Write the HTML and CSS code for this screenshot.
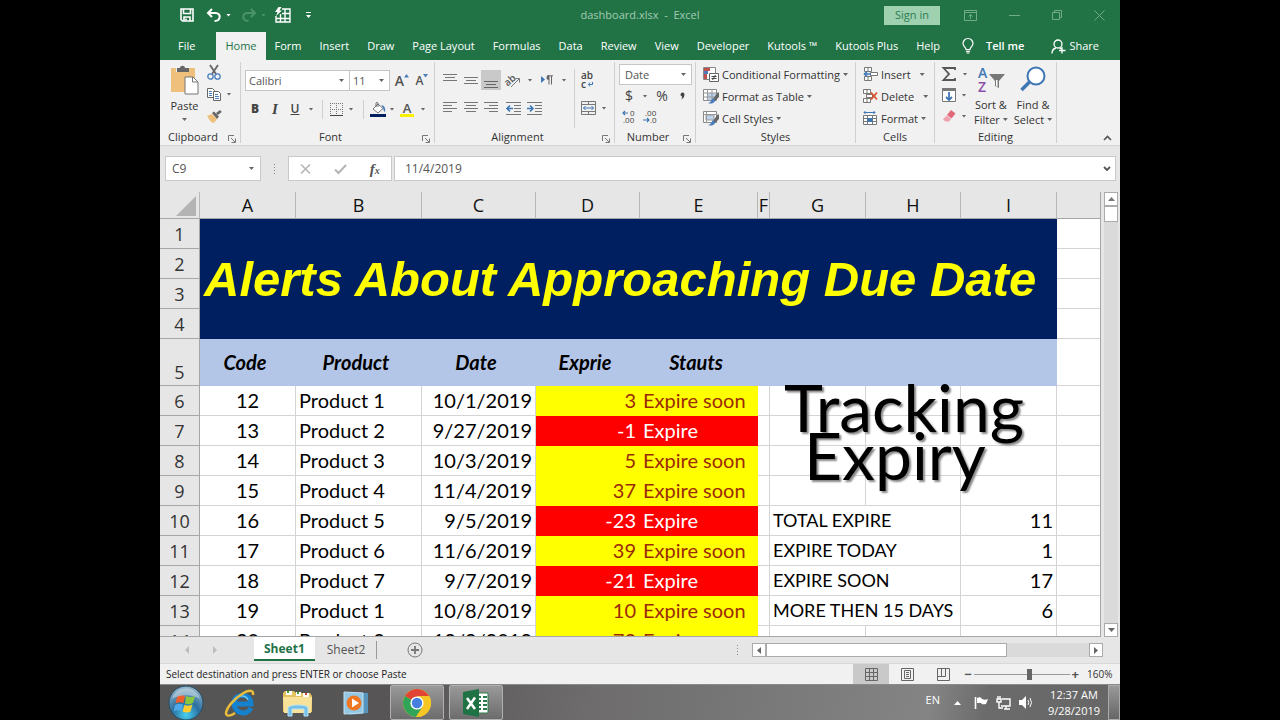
FILE: index.html
```html
<!DOCTYPE html>
<html lang="en">
<head>
<meta charset="utf-8">
<title>dashboard.xlsx - Excel</title>
<link rel="stylesheet" href="styles.css">
</head>
<body>
<div class="desktop">

<header class="titlebar">
  <div class="quick">
    <button class="qa" aria-label="Save"><svg width="14" height="14" viewBox="0 0 14 14" fill="none" stroke="#fff" stroke-width="1.6"><path d="M1 1h12v12H2.500L1 11.500z"/><path d="M3.500 1v4.500h7V1M4 13V9h6v4"/><path d="M6 10.500v2"/></svg></button>
    <button class="qa undo" aria-label="Undo"><svg width="16" height="14" viewBox="0 0 16 14" fill="none" stroke="#fff" stroke-width="2"><path d="M6 1L2 5l4 4M2.500 5h7c6 0 5.500 8-1 8"/></svg><span class="caret light"></span></button>
    <button class="qa redo" aria-label="Redo"><svg width="16" height="14" viewBox="0 0 16 14" fill="none" stroke="#4b9468" stroke-width="2"><path d="M10 1l4 4-4 4M13.500 5h-7c-6 0-5.500 8 1 8"/></svg><span class="caret dim"></span></button>
    <button class="qa" aria-label="Quick table"><svg width="17" height="16" viewBox="0 0 17 16" fill="none" stroke="#fff" stroke-width="1.400"><path d="M8 2h8v13H2V9M2 11.500h14M6.500 7v8M11 2v13M8 6.500h8"/><path d="M4.500 0h3L5.500 3.500H8L2 9l1.500-4H1z" fill="#fff" stroke="none"/></svg></button>
    <button class="qa more" aria-label="Customize toolbar"><svg width="7" height="8" viewBox="0 0 7 8" fill="#fff"><path d="M1 1h5v1H1zM1 4h5L3.500 7z"/></svg></button>
  </div>
  <div class="doc-title">dashboard.xlsx&nbsp; -&nbsp; Excel</div>
  <div class="window-controls">
    <button class="signin">Sign in</button>
    <button class="wc" aria-label="Ribbon options"><svg width="13" height="11" viewBox="0 0 13 11" fill="none" stroke="#6fac87"><path d="M.500.500h12v10H.500zM.500 2.500h12M6.500 9V4.500M4.500 6.500l2-2 2 2"/></svg></button>
    <button class="wc" aria-label="Minimize"><svg width="11" height="11" viewBox="0 0 11 11" stroke="#6fac87"><path d="M0 5.500h11"/></svg></button>
    <button class="wc" aria-label="Restore"><svg width="10" height="11" viewBox="0 0 10 11" fill="none" stroke="#6fac87"><path d="M.500 2.500h7v7h-7zM2.500 2.500v-2h7v7h-2"/></svg></button>
    <button class="wc" aria-label="Close"><svg width="11" height="11" viewBox="0 0 11 11" stroke="#6fac87"><path d="M.500.500l10 10M10.500.500l-10 10"/></svg></button>
  </div>
</header>

<nav class="tabs">
  <button class="tab file">File</button>
  <button class="tab active">Home</button>
  <button class="tab">Form</button>
  <button class="tab">Insert</button>
  <button class="tab">Draw</button>
  <button class="tab">Page Layout</button>
  <button class="tab">Formulas</button>
  <button class="tab">Data</button>
  <button class="tab">Review</button>
  <button class="tab">View</button>
  <button class="tab">Developer</button>
  <button class="tab">Kutools ™</button>
  <button class="tab">Kutools Plus</button>
  <button class="tab">Help</button>
  <button class="tab tell"><svg width="12" height="16" viewBox="0 0 12 16" fill="none" stroke="#fff" stroke-width="1.200"><path d="M4 11.500C4 9 1 8.500 1 5.500a5 5 0 0 1 10 0C11 8.500 8 9 8 11.500zM4 13.300h4M4.500 15h3"/></svg><span>Tell me</span></button>
  <button class="tab share"><svg width="15" height="15" viewBox="0 0 15 15" fill="none" stroke="#fff" stroke-width="1.300"><circle cx="7" cy="5" r="4"/><path d="M1 14.500c0-3 2-5 4-5.500M8.500 9l2 1M11 8v6.500M8 11.500h6.500"/></svg><span>Share</span></button>
</nav>

<section class="ribbon">
  <div class="group clipboard">
    <div class="body clip-body">
      <button class="big paste"><svg width="28" height="29" viewBox="0 0 28 29"><path d="M0 2h24v24H0z" fill="#eec07c"/><path d="M5 0h13v6H5z" fill="#f1f1f1"/><path d="M6 2h3c0-3 5-3 5 0h4v4H6z" fill="#666"/><path d="M14 11h8l5 5v12H14z" fill="#fff" stroke="#777"/><path d="M21.500 11v5H27" fill="none" stroke="#777"/></svg><span>Paste</span><span class="caret"></span></button>
      <div class="clip-side">
        <button class="ib w16" aria-label="Cut"><svg width="14" height="15" viewBox="0 0 14 15" fill="none"><path d="M3 0l6 9M11 0L5 9" stroke="#666" stroke-width="1.800"/><circle cx="3.500" cy="11.500" r="2.700" stroke="#4a7ebb" stroke-width="1.300"/><circle cx="10.500" cy="11.500" r="2.700" stroke="#4a7ebb" stroke-width="1.300"/></svg></button>
        <div class="row"><button class="ib w16" aria-label="Copy"><svg width="14" height="13" viewBox="0 0 14 13" fill="#fff" stroke="#666"><path d="M.500.500h5l2 2v7h-7z"/><path d="M2 3.500h3M2 5.500h3M2 7.500h3" stroke="#4a7ebb"/><path d="M6.500 3.500h5l2 2v7h-7z"/><path d="M8 6.500h3M8 8.500h4M8 10.500h4" stroke="#4a7ebb"/></svg></button><button class="ib w14" aria-label="Copy options"><span class="caret"></span></button></div>
        <button class="ib w16" aria-label="Format painter"><svg width="15" height="13" viewBox="0 0 15 13"><path d="M0 6l5-2 5 5-3 4-3-1z" fill="#eec07c"/><path d="M5 3l2-1.500 5 5L10 9zM9 3l4-3 1.800 2-4 3z" fill="#666"/></svg></button>
      </div>
    </div>
    <div class="glabel"><span>Clipboard</span><svg class="launch" width="8" height="8" viewBox="0 0 8 8" fill="none" stroke="#777"><path d="M.500 6V.500H6M3 3l4 4M7.500 3.500v4h-4"/></svg></div>
  </div>

  <div class="group font">
    <div class="body two">
      <div class="row">
        <span class="combo face"><select aria-label="Font"><option>Calibri</option></select><span class="caret"></span></span>
        <span class="combo size"><select aria-label="Font size"><option>11</option></select><span class="caret"></span></span>
        <button class="ib w24 grow" aria-label="Increase font size"><b>A</b><svg width="5" height="4" viewBox="0 0 5 4"><path d="M0 3.500L2.500 0 5 3.500z" fill="#4a7ebb"/></svg></button>
        <button class="ib w16 shrink" aria-label="Decrease font size"><b>A</b><svg width="5" height="4" viewBox="0 0 5 4"><path d="M0 0h5L2.500 3.500z" fill="#4a7ebb"/></svg></button>
      </div>
      <div class="row">
        <button class="ib w20 glyph"><b>B</b></button>
        <button class="ib w20 glyph serif"><i>I</i></button>
        <button class="ib w20 glyph"><u>U</u></button>
        <button class="ib w12" aria-label="Underline options"><span class="caret"></span></button>
        <span class="sep"></span>
        <button class="ib w16" aria-label="Borders"><svg width="13" height="13" viewBox="0 0 13 13" fill="none" stroke="#777"><path d="M.500 0v12M12.500 0v12M6.500 0v12M0 .500h13M0 6.500h13" stroke-dasharray="1 1"/><path d="M0 12.500h13" stroke="#444"/></svg></button>
        <button class="ib w14" aria-label="Border options"><span class="caret"></span></button>
        <span class="sep"></span>
        <button class="ib w18" aria-label="Fill color"><svg width="16" height="15" viewBox="0 0 16 15"><path d="M8 2l5 4.500-5 4.500-5-4z" fill="#fff" stroke="#777"/><path d="M6 5V1.500C6 0 8 0 8 1.500V5" fill="none" stroke="#666"/><path d="M11 3c3 0 5 3 4 7-2-1-1-4-4-7z" fill="#4a7ebb"/><path d="M0 12h16v3H0z" fill="#001f60"/></svg></button>
        <button class="ib w10" aria-label="Fill options"><span class="caret"></span></button>
        <button class="ib w20 fontcolor" aria-label="Font color"><b>A</b></button>
        <button class="ib w12" aria-label="Font color options"><span class="caret"></span></button>
      </div>
    </div>
    <div class="glabel"><span>Font</span><svg class="launch" width="8" height="8" viewBox="0 0 8 8" fill="none" stroke="#777"><path d="M.500 6V.500H6M3 3l4 4M7.500 3.500v4h-4"/></svg></div>
  </div>

  <div class="group align">
    <div class="body align-body">
      <div class="two align-main">
        <div class="row">
          <button class="ib w22" aria-label="Top align"><svg width="14" height="16" viewBox="0 0 14 16" stroke="#777"><path d="M0 2.500h14M2 5.500h10M0 8.500h14"/></svg></button>
          <button class="ib w20" aria-label="Middle align"><svg width="14" height="16" viewBox="0 0 14 16" stroke="#777"><path d="M0 5.500h14M2 8.500h10M0 11.500h14"/></svg></button>
          <button class="ib w20 on" aria-label="Bottom align"><svg width="14" height="16" viewBox="0 0 14 16" stroke="#666"><path d="M0 9.500h14M2 12.500h10M0 15.500h14"/></svg></button>
          <button class="ib w24" aria-label="Orientation"><svg width="16" height="15" viewBox="0 0 16 15"><text x="0" y="11" font-family="Open Sans" font-size="10" font-weight="600" fill="#555" transform="rotate(-42 5 9)">ab</text><path d="M6 14L14 6M10.500 5.500h4v4" fill="none" stroke="#777"/></svg></button>
          <button class="ib w10" aria-label="Orientation options"><span class="caret"></span></button>
          <button class="ib w24" aria-label="Text direction"><svg width="12" height="10" viewBox="0 0 12 10"><path d="M0 1l4 3.500L0 8z" fill="#3f77b5"/><path d="M8 1v8.500M10.500 1v8.500M6.500.800H12" fill="none" stroke="#666"/><path d="M8 0a2.500 2.500 0 0 0 0 5z" fill="#666"/></svg></button>
          <button class="ib w10" aria-label="Direction options"><span class="caret"></span></button>
        </div>
        <div class="row">
          <button class="ib w22" aria-label="Align left"><svg width="14" height="12" viewBox="0 0 14 12" stroke="#777"><path d="M0 .500h14M0 3.500h9M0 6.500h14M0 9.500h9"/></svg></button>
          <button class="ib w20" aria-label="Center"><svg width="14" height="12" viewBox="0 0 14 12" stroke="#777"><path d="M0 .500h14M2 3.500h10M0 6.500h14M2 9.500h10"/></svg></button>
          <button class="ib w20" aria-label="Align right"><svg width="14" height="12" viewBox="0 0 14 12" stroke="#777"><path d="M0 .500h14M5 3.500h9M0 6.500h14M5 9.500h9"/></svg></button>
          <button class="ib w24" aria-label="Decrease indent"><svg width="15" height="13" viewBox="0 0 15 13" fill="none" stroke="#777"><path d="M0 .500h15M8 3.500h7M8 6.500h7M8 9.500h7M0 12.500h15"/><path d="M7 6.500H1M4 3.500l-3 3 3 3" stroke="#3f77b5" stroke-width="1.600"/></svg></button>
          <button class="ib w18" aria-label="Increase indent"><svg width="15" height="13" viewBox="0 0 15 13" fill="none" stroke="#777"><path d="M0 .500h15M8 3.500h7M8 6.500h7M8 9.500h7M0 12.500h15"/><path d="M0 6.500h6M3 3.500l3 3-3 3" stroke="#3f77b5" stroke-width="1.600"/></svg></button>
        </div>
      </div>
      <div class="two align-side">
        <div class="row"><button class="ib w18 wrap" aria-label="Wrap text"><span>ab</span><span class="wrap-c">c<svg width="5" height="5" viewBox="0 0 5 5"><path d="M4.500 0v2.500H.500M2 .500l-1.500 2 1.500 2" fill="none" stroke="#3f77b5"/></svg></span></button></div>
        <div class="row"><button class="ib w18" aria-label="Merge and center"><svg width="15" height="14" viewBox="0 0 15 14" fill="none" stroke="#777"><path d="M.500.500h14v13H.500zM0 3.500h15M0 10.500h15M7.500 0v3M7.500 11v3"/><path d="M2.500 7h10M4.500 5l-2 2 2 2M10.500 5l2 2-2 2" stroke="#3f77b5"/></svg></button><button class="ib w14" aria-label="Merge options"><span class="caret"></span></button></div>
      </div>
    </div>
    <div class="glabel"><span>Alignment</span><svg class="launch" width="8" height="8" viewBox="0 0 8 8" fill="none" stroke="#777"><path d="M.500 6V.500H6M3 3l4 4M7.500 3.500v4h-4"/></svg></div>
  </div>

  <div class="group number">
    <div class="body three">
      <span class="combo fmt"><select aria-label="Number format"><option>Date</option></select><span class="caret"></span></span>
      <div class="row"><button class="ib w20 sym">$</button><button class="ib w12" aria-label="Currency options"><span class="caret"></span></button><button class="ib w22 sym">%</button><button class="ib w18" aria-label="Comma style"><svg width="5" height="8" viewBox="0 0 5 8"><path d="M4.500 2.500C4.500 5 3 7 1 7.500 2 6.500 2.300 5.500 2 4.500a2 2 0 1 1 2.500-2z" fill="#444"/></svg></button></div>
      <div class="row"><button class="ib w20" aria-label="Increase decimal"><svg width="14" height="14" viewBox="0 0 14 14"><text x="8" y="6" font-family="Open Sans" font-size="8" fill="#444">0</text><text x="1" y="13" font-family="Open Sans" font-size="8" fill="#444">.00</text><path d="M6 3H1M3 1L1 3l2 2" fill="none" stroke="#3f77b5" stroke-width="1.200"/></svg></button><button class="ib w22" aria-label="Decrease decimal"><svg width="14" height="14" viewBox="0 0 14 14"><text x="2" y="6" font-family="Open Sans" font-size="8" fill="#444">.00</text><text x="7" y="13" font-family="Open Sans" font-size="8" fill="#444">.0</text><path d="M0 10h6M4 8l2 2-2 2" fill="none" stroke="#3f77b5" stroke-width="1.200"/></svg></button></div>
    </div>
    <div class="glabel"><span>Number</span><svg class="launch" width="8" height="8" viewBox="0 0 8 8" fill="none" stroke="#777"><path d="M.500 6V.500H6M3 3l4 4M7.500 3.500v4h-4"/></svg></div>
  </div>

  <div class="group styles">
    <div class="body three">
      <button class="cmd"><svg width="16" height="15" viewBox="0 0 16 15"><path d="M.500.500h12v12H.500z" fill="#fff" stroke="#888"/><path d="M1 1h6v3H1zM1 7h3v5H1z" fill="#c0504d"/><path d="M1 4h4v3H1z" fill="#4a7ebb"/><path d="M6.500 6.500h9v8h-9z" fill="#fff" stroke="#666"/><path d="M8.500 9.500h5M8.500 11.500h5M12.500 8l-3 5" stroke="#444"/></svg><span>Conditional Formatting</span><span class="caret"></span></button>
      <button class="cmd"><svg width="16" height="15" viewBox="0 0 16 15"><path d="M.500.500h13v11H.500z" fill="#fff" stroke="#888"/><path d="M4 4h9v7H4z" fill="#bcd2ea"/><path d="M0 4h14M0 8h14M4.500 0v12M9 0v12" stroke="#999"/><path d="M15 3l1 1v4l-4 4-2-2z" fill="#666"/><path d="M10 9l2.500 2.500C10 15 8 15 5 14c3 0 3-3 5-5z" fill="#4a7ebb"/></svg><span>Format as Table</span><span class="caret"></span></button>
      <button class="cmd"><svg width="16" height="15" viewBox="0 0 16 15"><path d="M.500.500h13v11H.500z" fill="#fff" stroke="#888"/><path d="M3 4h8v5H3z" fill="#bcd2ea" stroke="#999"/><path d="M0 3.500h14M3.500 0v12" stroke="#999"/><path d="M15 3l1 1v4l-4 4-2-2z" fill="#666"/><path d="M10 9l2.500 2.500C10 15 8 15 5 14c3 0 3-3 5-5z" fill="#4a7ebb"/></svg><span>Cell Styles</span><span class="caret"></span></button>
    </div>
    <div class="glabel"><span>Styles</span></div>
  </div>

  <div class="group cells">
    <div class="body three">
      <button class="cmd"><svg width="15" height="15" viewBox="0 0 15 15" fill="#fff" stroke="#777"><path d="M1.500.500h7v4h-7zM1.500 9.500h7v4h-7zM5 .500v4M5 9.500v4M7.500 5.500h7v3h-7z"/><path d="M8 7H1M4 4.500L1.500 7 4 9.500" fill="none" stroke="#3f77b5" stroke-width="1.600"/></svg><span class="wide">Insert</span><span class="caret"></span></button>
      <button class="cmd"><svg width="15" height="15" viewBox="0 0 15 15" fill="#fff" stroke="#777"><path d="M.500.500h7v4h-7zM.500 9.500h7v4h-7zM4 .500v4M4 9.500v4M3.500 5.500h6v3h-6z"/><path d="M8 3.500l6 7M14 3.500l-6 7" fill="none" stroke="#d9532c" stroke-width="1.800"/></svg><span class="wide">Delete</span><span class="caret"></span></button>
      <button class="cmd"><svg width="15" height="15" viewBox="0 0 15 15" fill="none" stroke="#777"><path d="M.500 4.500h13v9H.500zM.500 7.500h13M.500 10.500h13M4.500 4v10M9.500 4v10" fill="#fff"/><path d="M4.500 7h5v4h-5z" fill="#3f77b5" stroke="none"/><path d="M1 1.500h11M2.500 0L1 1.500 2.500 3M10.500 0L12 1.500 10.500 3" stroke="#3f77b5"/></svg><span>Format</span><span class="caret"></span></button>
    </div>
    <div class="glabel"><span>Cells</span></div>
  </div>

  <div class="group editing">
    <div class="body edit-body">
      <div class="three edit-side">
        <div class="row"><button class="ib w18" aria-label="AutoSum"><svg width="14" height="14" viewBox="0 0 14 14"><path d="M13 3V1H1.500L7 7l-5.500 6H13v-2" fill="none" stroke="#555" stroke-width="1.800"/></svg></button><button class="ib w14" aria-label="Sum options"><span class="caret"></span></button></div>
        <div class="row"><button class="ib w18" aria-label="Fill"><svg width="14" height="14" viewBox="0 0 14 14" fill="none"><path d="M.500.500h13v13H.500z" fill="#fff" stroke="#777"/><path d="M0 0h14v3H0z" fill="#777"/><path d="M7 4v8M4 9l3 3 3-3" stroke="#3f77b5" stroke-width="1.800"/></svg></button><button class="ib w12" aria-label="Fill options"><span class="caret"></span></button></div>
        <div class="row"><button class="ib w18" aria-label="Clear"><svg width="13" height="12" viewBox="0 0 13 12"><path d="M8 0l4.500 3.500-4 5L4 5z" fill="#e06878"/><path d="M3.500 5.500L8 9l-2 2.500H2.500L0 9.500z" fill="#f0a0aa"/></svg></button><button class="ib w12" aria-label="Clear options"><span class="caret"></span></button></div>
      </div>
      <button class="big"><svg width="28" height="28" viewBox="0 0 28 28"><text x="1" y="12" font-family="Open Sans" font-size="14" font-weight="600" fill="#3f77b5">A</text><text x="1" y="26" font-family="Open Sans" font-size="14" font-weight="600" fill="#8e4fa8">Z</text><path d="M12 8h16l-6 7v7l-4-2v-5z" fill="#777"/><path d="M19 14v6l1.500 1v-7z" fill="#fff"/></svg><span>Sort &amp;</span><span class="line">Filter <span class="caret"></span></span></button>
      <button class="big find"><svg width="26" height="28" viewBox="0 0 26 28" fill="none" stroke="#3f77b5"><circle cx="16" cy="10" r="8.500" fill="#fff" stroke-width="2"/><path d="M9.500 16L1.500 24" stroke-width="3.500"/></svg><span>Find &amp;</span><span class="line">Select <span class="caret"></span></span></button>
    </div>
    <div class="glabel"><span>Editing</span></div>
  </div>
  <button class="collapse" aria-label="Collapse the ribbon"><svg width="9" height="6" viewBox="0 0 9 6" fill="none" stroke="#555" stroke-width="1.600"><path d="M1 5l3.500-3.500L8 5"/></svg></button>
</section>

<section class="formula-bar">
  <div class="namebox"><input type="text" value="C9" aria-label="Name box"><span class="caret"></span></div>
  <div class="dots"><i></i><i></i><i></i><i></i></div>
  <div class="fxbox">
    <button class="ib" aria-label="Cancel"><svg width="11" height="10" viewBox="0 0 11 10" stroke="#b5b5b5" stroke-width="1.600"><path d="M1 .500l9 9M10 .500l-9 9"/></svg></button>
    <button class="ib" aria-label="Enter"><svg width="13" height="10" viewBox="0 0 13 10" fill="none" stroke="#b5b5b5" stroke-width="2"><path d="M1 5.500L4.500 9 12 1"/></svg></button>
    <button class="ib fx" aria-label="Insert function"><i>f</i><small>x</small></button>
  </div>
  <div class="formula"><input type="text" value="11/4/2019" aria-label="Formula"><svg width="8" height="6" viewBox="0 0 8 6" fill="none" stroke="#555" stroke-width="1.800"><path d="M1 1l3 3 3-3"/></svg></div>
</section>

<main class="workspace">
  <div class="grid">
    <table>
      <colgroup><col class="c-row"><col class="c-a"><col class="c-b"><col class="c-c"><col class="c-d"><col class="c-e"><col class="c-f"><col class="c-g"><col class="c-h"><col class="c-i"><col></colgroup>
      <thead>
        <tr><th class="corner"><svg width="20" height="20" viewBox="0 0 20 20"><path d="M20 0v20H0z" fill="#b4b4b4"/></svg></th><th>A</th><th>B</th><th>C</th><th>D</th><th>E</th><th>F</th><th>G</th><th>H</th><th>I</th><th></th></tr>
      </thead>
      <tbody>
        <tr><th>1</th><td class="banner" colspan="9" rowspan="4">Alerts About Approaching Due Date</td><td></td></tr>
        <tr><th>2</th><td></td></tr>
        <tr><th>3</th><td></td></tr>
        <tr><th>4</th><td></td></tr>
        <tr class="heads"><th>5</th><td>Code</td><td>Product</td><td>Date</td><td>Exprie</td><td>Stauts</td><td></td><td></td><td></td><td></td><td class="plain"></td></tr>
        <tr class="soon"><th>6</th><td>12</td><td>Product 1</td><td>10/1/2019</td><td>3</td><td>Expire soon</td><td></td><td></td><td></td><td></td><td></td></tr>
        <tr class="late"><th>7</th><td>13</td><td>Product 2</td><td>9/27/2019</td><td>-1</td><td>Expire</td><td></td><td></td><td></td><td></td><td></td></tr>
        <tr class="soon"><th>8</th><td>14</td><td>Product 3</td><td>10/3/2019</td><td>5</td><td>Expire soon</td><td></td><td></td><td></td><td></td><td></td></tr>
        <tr class="soon"><th>9</th><td>15</td><td>Product 4</td><td>11/4/2019</td><td>37</td><td>Expire soon</td><td></td><td></td><td></td><td></td><td></td></tr>
        <tr class="late"><th>10</th><td>16</td><td>Product 5</td><td>9/5/2019</td><td>-23</td><td>Expire</td><td></td><td class="caps" colspan="2">TOTAL EXPIRE</td><td class="num">11</td><td></td></tr>
        <tr class="soon"><th>11</th><td>17</td><td>Product 6</td><td>11/6/2019</td><td>39</td><td>Expire soon</td><td></td><td class="caps" colspan="2">EXPIRE TODAY</td><td class="num">1</td><td></td></tr>
        <tr class="late"><th>12</th><td>18</td><td>Product 7</td><td>9/7/2019</td><td>-21</td><td>Expire</td><td></td><td class="caps" colspan="2">EXPIRE SOON</td><td class="num">17</td><td></td></tr>
        <tr class="soon"><th>13</th><td>19</td><td>Product 1</td><td>10/8/2019</td><td>10</td><td>Expire soon</td><td></td><td class="caps" colspan="2">MORE THEN 15 DAYS</td><td class="num">6</td><td></td></tr>
        <tr class="soon"><th>14</th><td>20</td><td>Product 2</td><td>12/9/2019</td><td>72</td><td>Expire soon</td><td></td><td></td><td></td><td></td><td></td></tr>
      </tbody>
    </table>
    <div class="wordart"><div>Tracking</div><div>Expiry</div></div>
  </div>
  <div class="vscroll">
    <button class="sb" aria-label="Scroll up"><svg width="7" height="4" viewBox="0 0 7 4"><path d="M0 4l3.500-4L7 4z" fill="#777"/></svg></button>
    <div class="vthumb"></div>
    <button class="sb end" aria-label="Scroll down"><svg width="7" height="4" viewBox="0 0 7 4"><path d="M0 0h7L3.500 4z" fill="#666"/></svg></button>
  </div>
</main>

<div class="sheetbar">
  <div class="sheetnav"><svg width="4" height="8" viewBox="0 0 4 8"><path d="M4 0v8L0 4z" fill="#bdbdbd"/></svg><svg width="4" height="8" viewBox="0 0 4 8"><path d="M0 0v8l4-4z" fill="#bdbdbd"/></svg></div>
  <button class="sheet current">Sheet1</button>
  <button class="sheet">Sheet2</button>
  <span class="sheetsep"></span>
  <button class="ib add" aria-label="New sheet"><svg width="16" height="16" viewBox="0 0 16 16" fill="none" stroke="#777"><circle cx="8" cy="8" r="7"/><path d="M8 4v8M4 8h8" stroke-width="1.800"/></svg></button>
  <div class="dots"><i></i><i></i><i></i><i></i></div>
  <div class="hscroll">
    <button class="sb" aria-label="Scroll left"><svg width="4" height="7" viewBox="0 0 4 7"><path d="M4 0v7L0 3.500z" fill="#666"/></svg></button>
    <div class="hthumb"></div><div class="htrack"></div>
    <button class="sb" aria-label="Scroll right"><svg width="4" height="7" viewBox="0 0 4 7"><path d="M0 0v7l4-3.500z" fill="#666"/></svg></button>
  </div>
</div>

<footer class="status">
  <span class="message">Select destination and press ENTER or choose Paste</span>
  <button class="view on" aria-label="Normal view"><svg width="13" height="13" viewBox="0 0 13 13" fill="none" stroke="#666"><path d="M.500.500h12v12H.500zM.500 4.500h12M.500 8.500h12M4.500.500v12M8.500.500v12"/></svg></button>
  <button class="view" aria-label="Page layout view"><svg width="13" height="13" viewBox="0 0 13 13" fill="none" stroke="#666"><path d="M.500.500h12v12H.500zM3.500 2.500h6v8h-6zM5 4.500h3M5 6.500h3M5 8.500h3"/></svg></button>
  <button class="view" aria-label="Page break view"><svg width="13" height="13" viewBox="0 0 13 13" fill="none" stroke="#666"><path d="M.500.500h12v12H.500zM.500 8.500h8v-8M4.500.500v8"/></svg></button>
  <div class="zoom"><span>−</span><input type="range" min="10" max="260" value="158" aria-label="Zoom"><span>+</span></div>
  <span class="percent">160%</span>
</footer>

<div class="taskbar">
  <button class="task orb" aria-label="Start"><svg width="36" height="36" viewBox="0 0 36 36"><defs><radialGradient id="orb" cx=".5" cy=".85" r=".8"><stop offset="0" stop-color="#48d0f0"/><stop offset=".5" stop-color="#2a6f9f"/><stop offset="1" stop-color="#8fb2c8"/></radialGradient></defs><circle cx="18" cy="18" r="17" fill="url(#orb)" stroke="#234b63"/><path d="M9 12c3-2 5-2 8-1l-1.500 7c-3-1-5-1-8 .500z" fill="#f0602c"/><path d="M18 11c3 1.500 6 1.500 9 0l-2 7c-3 1.500-5.500 1.500-8 .500z" fill="#8cc63f"/><path d="M7 20c3-2 5-1.500 8-.500L13.500 26c-3-1-5-1-8 .500z" fill="#4fa8e8"/><path d="M16.500 20c3 1 5 1 8-.500l-2 7c-3 1.500-5 1-8 0z" fill="#fccb2e"/><path d="M4 14a14.500 14.500 0 0 1 28 0c-8-5-20-5-28 0z" fill="#fff" opacity=".35"/></svg></button>
  <button class="task" aria-label="Internet Explorer"><svg width="34" height="30" viewBox="0 0 34 30" fill="none"><path d="M28 20c-4 8-17 6-17-5 0-10 17-11 17 1H12" stroke="#1582cf" stroke-width="5"/><path d="M11 13c2-6 12-7 14-1" stroke="#6cc5f2" stroke-width="1.500"/><path d="M30 7c1-6-5-5-11-1C11 11 4 19 3 25c0 4 5 3 9 0" stroke="#e9bd3c" stroke-width="2.500"/></svg></button>
  <button class="task" aria-label="Explorer"><svg width="32" height="28" viewBox="0 0 32 28"><path d="M1 4l2-2h9l2 2h14l2 3v16H1z" fill="#e5c260"/><path d="M4 2h6v4H4zM14 3h5v4h-5zM21 4h6v4h-6z" fill="#fff"/><path d="M5 2h2v2H5zM15 3h2v2h-2z" fill="#3fa535"/><path d="M23 4h2v2h-2z" fill="#d2452f"/><path d="M1 8h29l-1 16H2z" fill="#f8e29a"/><path d="M6 27V19c0-4 20-4 20 0v8h-4v-7H10v7z" fill="#74bfe6" stroke="#b8e3f7"/></svg></button>
  <button class="task" aria-label="Media Player"><svg width="26" height="26" viewBox="0 0 26 26"><path d="M5 2l20 1v20L6 25z" fill="#5794bd"/><path d="M1 2l19 1v20L1 24z" fill="#93c8e4" stroke="#c2e1f0"/><circle cx="11" cy="13" r="7.500" fill="#ef7622"/><path d="M9 8.500l7 4.500-7 4.500z" fill="#fff"/></svg></button>
  <button class="task open" aria-label="Chrome"><svg width="30" height="30" viewBox="0 0 30 30"><circle cx="15" cy="15" r="14" fill="#f6c624"/><path d="M15 15L2.900 8A14 14 0 0 1 27.100 8z" fill="#df4434"/><path d="M2.900 8A14 14 0 0 0 14 29l7-11-6-3z" fill="#31a457"/><path d="M15 8h12.100A14 14 0 0 1 14 29l7.200-11z" fill="#f6c624"/><circle cx="15" cy="15" r="6.600" fill="#fff"/><circle cx="15" cy="15" r="5.200" fill="#477fe0"/></svg></button>
  <button class="task open" aria-label="Excel"><svg width="28" height="28" viewBox="0 0 28 28"><path d="M13 4h13v20H13z" fill="#fff" stroke="#287b48"/><path d="M15 7h4v2h-4zM21 7h4v2h-4zM15 11h4v2h-4zM21 11h4v2h-4zM15 15h4v2h-4zM21 15h4v2h-4zM15 19h4v2h-4zM21 19h4v2h-4z" fill="#287b48"/><path d="M1 3l16-3v28L1 25z" fill="#1f7244"/><path d="M5 9l8 11M13 8.500L5 20" stroke="#fff" stroke-width="2.500"/></svg></button>
  <div class="tray">
    <span class="lang">EN</span>
    <svg width="7" height="4" viewBox="0 0 7 4"><path d="M0 4l3.500-4L7 4z" fill="#fff"/></svg>
    <svg width="14" height="14" viewBox="0 0 14 14"><path d="M1.500 1v12" stroke="#fff" stroke-width="1.600"/><path d="M3 2c2-1 4-1 5 1 2 1 4 1 6 0l-2 5c-2 0-4 1-5-1H3z" fill="#fff"/></svg>
    <svg width="15" height="14" viewBox="0 0 15 14" fill="none" stroke="#fff" stroke-width="1.400"><path d="M6 3h8v7H5M8 13h6M10 10v3M1 3h4v3H1zM2 0v3M4 0v3M3 6v6h4"/></svg>
    <svg width="14" height="13" viewBox="0 0 14 13" fill="none" stroke="#fff"><path d="M0 4h3l4-4v13L3 9H0z" fill="#fff" stroke="none"/><path d="M9 4q1.500 2.500 0 5M11 2q3 4.500 0 9"/></svg>
  </div>
  <div class="clock"><span>12:37 AM</span><span>9/28/2019</span></div>
  <button class="peek" aria-label="Show desktop"></button>
</div>

</div>
</body>
</html>
```
FILE: styles.css
```css
* { box-sizing: border-box; }
body { margin: 0; background: #000; font: 11px/14px "Open Sans", "Noto Sans", sans-serif; color: #333; }
button, input, select { font: inherit; color: inherit; border: 0; margin: 0; padding: 0; background: none; }
input:focus { outline: none; }
svg { display: block; flex: none; overflow: visible; }
.desktop { width: 75%; height: 100vh; margin: 0 auto; display: flex; flex-direction: column; background: #e6e6e6; overflow: hidden; }
.caret { flex: none; width: 5px; height: 3px; background: #666; clip-path: polygon(0 0, 100% 0, 50% 100%); }
.caret.light { background: #fff; }
.caret.dim { background: #4b9468; }

.titlebar { flex: none; height: 30px; background: #217346; display: grid; grid-template-columns: 1fr auto 1fr; align-items: center; }
.quick { display: flex; align-items: center; padding-left: 20px; gap: 12px; }
.qa { display: flex; align-items: center; gap: 4px; }
.qa.redo { margin-right: -4px; }
.qa.undo { margin-right: -2px; }
.qa.more { margin-left: 2px; }
.doc-title { color: #a3cbb2; }
.window-controls { display: flex; align-items: center; justify-content: flex-end; padding-right: 15px; gap: 32px; }
.signin { width: 56px; height: 19px; background: #9fd0b0; color: #2b7d50; margin-right: -8px; }

.tabs { flex: none; height: 30px; padding-top: 2px; background: #217346; display: flex; }
.tab { color: #fff; padding: 0 9px; white-space: nowrap; display: flex; align-items: center; }
.tab.file { margin: 0 12px 0 9px; }
.tab.active { background: #f1f1f1; color: #217346; }
.tab.tell { gap: 12px; margin-left: 4px; font-weight: 600; }
.tab.share { margin-left: auto; gap: 3px; padding-right: 21px; }

.ribbon { flex: none; height: 86px; background: #f1f1f1; border-bottom: 1px solid #d5d5d5; display: flex; padding-top: 2px; }
.group { flex: none; display: flex; flex-direction: column; position: relative; border-right: 1px solid #d0d0d0; margin-bottom: 2px; }
.clipboard { width: 81px; }
.font { width: 194px; }
.align { width: 180px; }
.number { width: 81px; }
.styles { width: 160px; }
.cells { width: 79px; }
.editing { width: 122px; }
.body { flex: 1; min-height: 0; }
.glabel { flex: none; height: 12px; display: flex; justify-content: center; align-items: center; padding-right: 14px; color: #333; }
.styles .glabel, .cells .glabel, .editing .glabel { padding-right: 0; }
.launch { position: absolute; right: 4px; bottom: 0; }
.row { display: flex; align-items: center; }
.ib { display: flex; align-items: center; justify-content: center; height: 20px; flex: none; }
.ib.on { background: #c9c9c9; }
.w10 { width: 10px; } .w12 { width: 12px; } .w14 { width: 14px; } .w16 { width: 16px; } .w18 { width: 18px; }
.w20 { width: 20px; } .w22 { width: 22px; } .w24 { width: 24px; }
.two { display: flex; flex-direction: column; gap: 8px; padding: 8px 0 0 4px; }
.three { display: flex; flex-direction: column; gap: 1px; padding-top: 2px; }
.clip-body { display: flex; }
.big { display: flex; flex-direction: column; align-items: center; white-space: nowrap; line-height: 15px; }
.big svg { margin-bottom: 3px; }
.big .line { display: flex; align-items: center; gap: 3px; }
.paste { width: 46px; padding: 4px 0 0 3px; }
.paste .caret { margin-top: 5px; }
.clip-side { display: flex; flex-direction: column; gap: 2px; }
.combo { display: flex; align-items: center; height: 21px; background: #fff; border: 1px solid #c6c6c6; padding: 0 5px; }
.combo select { appearance: none; flex: 1; min-width: 0; padding-left: 0; color: #555; }
.face { width: 105px; padding-left: 3px; }
.size { width: 40px; border-left: 0; padding-left: 3px; }
.grow { font-size: 14px; align-items: flex-start; padding-top: 3px; }
.grow b, .shrink b { font-weight: 600; color: #555; }
.shrink { font-size: 12px; align-items: flex-start; padding-top: 3px; }
.glyph { font-size: 12px; color: #444; font-weight: 600; }
.serif { font-family: "Liberation Serif", serif; font-size: 15px; font-weight: 700; }
.sep { width: 1px; height: 19px; background: #d0d0d0; margin: 0 5px; flex: none; }
.fontcolor { font-size: 13px; line-height: 12px; }
.fontcolor b { color: #555; font-weight: 600; border-bottom: 3px solid #f8f000; width: 14px; }
.align-body { display: flex; }
.align-side { border-left: 1px solid #d0d0d0; margin: 7px 0 3px 5px; padding-top: 1px; padding-left: 4px; }
.wrap { flex-direction: column; font-size: 10px; line-height: 9px; font-weight: 600; color: #444; align-items: flex-start; padding-left: 2px; }
.wrap-c { display: flex; align-items: center; gap: 2px; }
.number .three { padding-left: 4px; }
.fmt { width: 73px; }
.sym { font-size: 14px; color: #444; }
.cmd { display: flex; align-items: center; gap: 3px; height: 21px; white-space: nowrap; }
.styles .three, .cells .three { padding-left: 7px; }
.cmd .wide { margin-right: 6px; }
.edit-body { display: flex; gap: 6px; }
.edit-side { padding-left: 5px; margin-right: -4px; }
.editing .big { padding-top: 4px; }
.collapse { margin: auto 8px 4px auto; }

.formula-bar { flex: none; height: 46px; display: flex; padding: 10px 4px 11px 5px; color: #555; font-size: 12px; }
.formula-bar > div:not(.dots) { background: #fff; border: 1px solid #c9c9c9; display: flex; align-items: center; }
.namebox { width: 96px; padding: 0 6px; }
.namebox input, .formula input { flex: 1; min-width: 0; }
.dots { width: 27px; display: flex; flex-direction: column; align-items: center; justify-content: center; gap: 2px; }
.dots i { width: 1px; height: 1px; background: #888; }
.fxbox { width: 104px; justify-content: space-around; }
.fx { font-family: "Liberation Serif", serif; font-size: 15px; font-weight: 700; }
.fx small { font-size: 10px; font-style: italic; padding-top: 4px; }
.formula { flex: 1; margin-left: 2px; padding: 0 4px 0 10px; }

.workspace { flex: 1; min-height: 0; display: flex; }
.grid { flex: 1; min-width: 0; position: relative; overflow: hidden; border-right: 1px solid #a6a6a6; border-bottom: 1px solid #a6a6a6; }
table { width: 100%; table-layout: fixed; border-collapse: separate; border-spacing: 0; background: #fff; font: 20px/29px Lato, sans-serif; color: #000; }
.c-row { width: 40px; } .c-a { width: 96px; } .c-b { width: 126px; } .c-c { width: 114px; } .c-d { width: 104px; } .c-e { width: 118px; }
.c-f { width: 12px; } .c-g { width: 96px; } .c-h { width: 95px; } .c-i { width: 96px; }
td { height: 30px; padding: 0 3px; border-right: 1px solid #d4d4d4; border-bottom: 1px solid #d4d4d4; white-space: nowrap; }
td:last-child { border-right: 0; }
th { padding: 0; font: 18px/26px "Open Sans", sans-serif; color: #333; background: #e6e6e6; border-right: 1px solid #a6a6a6; border-bottom: 1px solid #a6a6a6; }
thead th { height: 27px; border-right-color: #b8b8b8; color: #111; }
thead th:last-child { border-right: 0; }
.corner svg { margin: 2px 3px 0 auto; }
td.banner { background: #001f60; border: 0; padding: 0 4px; font: italic 700 49px/60px "Liberation Sans", sans-serif; color: #ffff00; }
.heads td { height: 47px; background: #b4c6e7; border-color: #b4c6e7; text-align: center; font-weight: 700; font-style: italic; padding-right: 8px; }
.heads td.plain { background: #fff; border-color: #d4d4d4; }
.heads th { vertical-align: bottom; }
.soon td:nth-child(2), .late td:nth-child(2) { text-align: center; }
.soon td:nth-child(4), .soon td:nth-child(5), .late td:nth-child(4), .late td:nth-child(5), td.num { text-align: right; }
.soon td:nth-child(5), .soon td:nth-child(6) { background: #ffff00; border-color: #ffff00; color: #9c2a06; }
.late td:nth-child(5), .late td:nth-child(6) { background: #ff0000; border-color: #ff0000; color: #fff; }
td.caps { font-size: 18px; }
.wordart { position: absolute; left: 624px; top: 191px; font: 66px/48px Lato, sans-serif; color: #000; text-shadow: 2px 2px 2px #888; }
.wordart div + div { padding-left: 20px; }
.vscroll { flex: none; width: 19px; padding: 0 2px 0 3px; display: flex; flex-direction: column; background: linear-gradient(#dadada, #dadada) content-box; }
.sb { flex: none; width: 14px; height: 14px; background: #fff; border: 1px solid #ababab; display: flex; align-items: center; justify-content: center; }
.vthumb { height: 16px; background: #fff; border: 1px solid #ababab; }
.sb.end { margin-top: auto; }

.sheetbar { flex: none; height: 26px; display: flex; align-items: center; color: #555; }
.sheetnav { width: 94px; padding: 0 37px 0 25px; display: flex; justify-content: space-between; }
.sheet { align-self: flex-start; height: 24px; padding: 1px 11px 0 12px; font-size: 12px; }
.sheet.current { background: #fff; color: #217346; font-weight: 700; border-bottom: 2px solid #217346; padding: 2px 10px 0; }
.sheetsep { width: 1px; height: 18px; background: #999; }
.add { margin-left: 30px; margin-right: auto; }
.sheetbar .dots { width: 30px; }
.hscroll { width: 351px; display: flex; background: #dadada; margin-right: 17px; }
.hthumb { flex: 240; background: #fff; border: 1px solid #ababab; }
.htrack { flex: 83; }

.status { flex: none; height: 21px; background: #f1f1f1; border-top: 1px solid #d8d8d8; display: flex; align-items: center; }
.message { flex: 1; padding-left: 6px; font-size: 10px; color: #222; }
.view { width: 36px; height: 20px; display: flex; align-items: center; justify-content: center; }
.view.on { background: #c9c9c9; }
.zoom { display: flex; align-items: center; gap: 2px; margin-left: 3px; font-size: 13px; font-weight: 700; color: #555; }
.zoom input { appearance: none; width: 96px; height: 12px; background: linear-gradient(#999, #999) center / 100% 1px no-repeat; }
.zoom input::-webkit-slider-thumb { appearance: none; width: 5px; height: 11px; background: #666; }
.percent { width: 41px; padding: 0 6px 0 8px; font-size: 10px; }

.taskbar { flex: none; height: 36px; display: flex; align-items: center; background: linear-gradient(100deg, #555 0, #575556 25%, #6e6c6d 45%, #7a7a7a 65%, #848484 80%, #6b6b6b 86%, #666 100%); border-top: 1px solid #8a8a8a; color: #fff; }
.task { width: 58px; height: 35px; display: flex; align-items: center; justify-content: center; flex: none; }
.task.orb { width: 51px; }
.task.open { width: 54px; border: 1px solid #b0b0b0; border-radius: 2px; background: linear-gradient(#999, #6c6c6c); margin-left: 5px; }
.tray { margin-left: auto; display: flex; align-items: center; gap: 8px; }
.lang { margin: 0 6px 5px 0; }
.tray svg:nth-child(2) { margin-right: 5px; }
.clock { width: 75px; padding-left: 7px; display: flex; flex-direction: column; align-items: center; line-height: 16px; }
.peek { width: 12px; height: 35px; border: 1px solid #aaa; background: linear-gradient(#999, #666); }
```
